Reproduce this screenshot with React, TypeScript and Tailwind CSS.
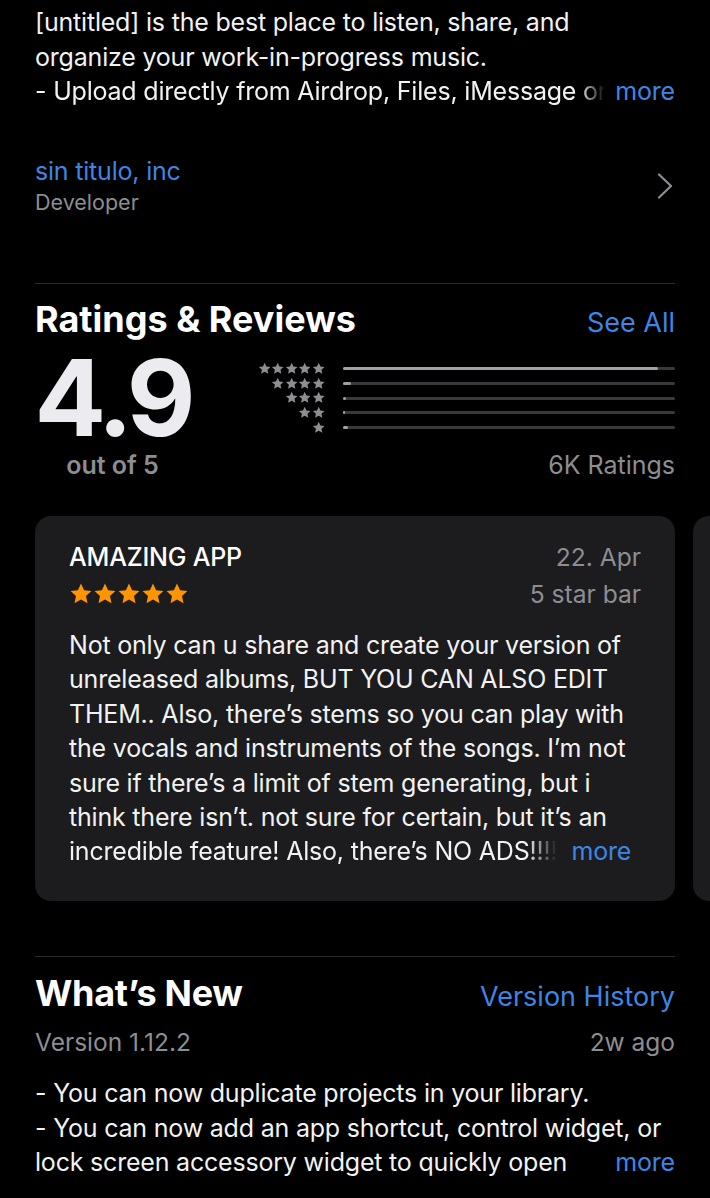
const reviewLines = [
  "Not only can u share and create your version of",
  "unreleased albums, BUT YOU CAN ALSO EDIT",
  "THEM.. Also, there\u2019s stems so you can play with",
  "the vocals and instruments of the songs. I\u2019m not",
  "sure if there\u2019s a limit of stem generating, but i",
  "think there isn\u2019t. not sure for certain, but it\u2019s an",
];

const bars = [
  { stars: 5, pct: 95 },
  { stars: 4, pct: 2.5 },
  { stars: 3, pct: 0.8 },
  { stars: 2, pct: 0.3 },
  { stars: 1, pct: 1.4 },
];

function Star({ className }: { className: string }) {
  return (
    <svg viewBox="0 0 24 24" className={className} fill="currentColor">
      <path d="M12 1.5l3.1 6.7 7.3.8-5.4 5 1.5 7.2L12 17.6l-6.5 3.6 1.5-7.2-5.4-5 7.3-.8z" />
    </svg>
  );
}

export default function App() {
  return (
    <div
      className="min-h-screen w-[710px] overflow-hidden bg-black text-white"
      style={{ fontFamily: "Inter, 'Noto Sans', sans-serif" }}
    >
      <div className="px-[35px]">
        {/* description */}
        <div className="pt-[5px] text-[25px] leading-[34.5px] tracking-[-0.2px] text-[#f2f2f2]">
          <div className="whitespace-nowrap">[untitled] is the best place to listen, share, and</div>
          <div className="whitespace-nowrap">organize your work-in-progress music.</div>
          <div className="flex whitespace-nowrap">
            <span className="min-w-0 flex-1 overflow-hidden [mask-image:linear-gradient(to_right,black_calc(100%-26px),transparent)]">
              - Upload directly from Airdrop, Files, iMessage or
            </span>
            <span className="ml-[10px] text-[#3d86e6]">more</span>
          </div>
        </div>

        {/* developer */}
        <div className="mt-[46px] flex items-center justify-between">
          <div>
            <div className="text-[25px] leading-[32px] tracking-[-0.2px] text-[#3d86e6]">sin titulo, inc</div>
            <div className="text-[21.5px] leading-[30px] text-[#8d8d92]">Developer</div>
          </div>
          <svg viewBox="0 0 16 26" className="mr-[2px] h-[26px] w-[16px]" fill="none">
            <path d="M2 1.5l12 11.5L2 24.5" stroke="#8d8d92" strokeWidth="2.2" strokeLinecap="round" strokeLinejoin="round" />
          </svg>
        </div>

        <div className="mt-[66px] h-px bg-[#2c2c2e]" />

        {/* ratings */}
        <div className="mt-[15px] flex items-baseline justify-between">
          <h2 className="text-[36px] font-bold leading-[40px] tracking-[0px]">Ratings &amp; Reviews</h2>
          <span className="text-[27px] text-[#3d86e6]">See All</span>
        </div>

        <div className="mt-[5px] flex">
          <div className="flex w-[155px] flex-col items-center">
            <div className="text-[106px] font-bold leading-[100px] tracking-[-5px] text-[#ececf0]">4.9</div>
            <div className="text-[25px] font-semibold leading-[34px] text-[#8d8d92]">out of 5</div>
          </div>
          <div className="ml-[45px] flex flex-1 flex-col">
            <div className="mt-[14px] flex flex-col gap-[1.75px]">
              {bars.map((b) => (
                <div key={b.stars} className="flex h-[13px] items-center">
                  <div className="flex w-[90px] justify-end text-[#8d8d92]">
                    {Array.from({ length: b.stars }).map((_, i) => (
                      <Star key={i} className="h-[13.4px] w-[13.4px]" />
                    ))}
                  </div>
                  <div className="ml-[18px] h-[3px] flex-1 rounded-full bg-[#3a3a3c]">
                    <div
                      className="h-full min-w-[2px] rounded-full bg-[#a0a0a5]"
                      style={{ width: `${b.pct}%` }}
                    />
                  </div>
                </div>
              ))}
            </div>
            <div className="mt-auto text-right text-[25px] leading-[34px] text-[#8d8d92]">6K Ratings</div>
          </div>
        </div>
      </div>

      {/* review cards */}
      <div className="mt-[34px] flex gap-[18px] pl-[35px]">
        <div className="w-[640px] shrink-0 rounded-[16px] bg-[#1c1c1e] px-[34px] pt-[24px] pb-[32px]">
          <div className="flex justify-between">
            <div>
              <div className="text-[25px] font-medium leading-[34px] tracking-[-0.2px]">AMAZING APP</div>
              <div className="mt-[8px] flex text-[#ff9500]">
                {Array.from({ length: 5 }).map((_, i) => (
                  <Star key={i} className="h-[24px] w-[24px]" />
                ))}
              </div>
            </div>
            <div className="-mt-[1px] text-right text-[24.6px] leading-[37px] text-[#8d8d92]">
              <div>22. Apr</div>
              <div>5 star bar</div>
            </div>
          </div>
          <div className="mt-[15px] text-[25px] leading-[34.4px] tracking-[-0.2px] text-[#f2f2f2]">
            {reviewLines.map((l) => (
              <div key={l} className="whitespace-nowrap">{l}</div>
            ))}
            <div className="flex whitespace-nowrap">
              <span className="overflow-hidden [mask-image:linear-gradient(to_right,black_calc(100%-30px),transparent)]">
                incredible feature! Also, there&rsquo;s NO ADS!!!!
              </span>
              <span className="ml-[14px] text-[#3d86e6]">more</span>
            </div>
          </div>
        </div>
        <div className="w-[640px] shrink-0 rounded-[16px] bg-[#1c1c1e]" />
      </div>

      <div className="px-[35px]">
        <div className="mt-[55px] h-px bg-[#2c2c2e]" />

        {/* what's new */}
        <div className="mt-[16px] flex items-baseline justify-between">
          <h2 className="text-[36px] font-bold leading-[40px] tracking-[-0.3px]">What&rsquo;s New</h2>
          <span className="text-[27px] text-[#3d86e6]">Version History</span>
        </div>
        <div className="mt-[8px] flex justify-between text-[24.5px] leading-[34px] text-[#8d8d92]">
          <span>Version 1.12.2</span>
          <span>2w ago</span>
        </div>
        <div className="mt-[17px] text-[25px] leading-[34.5px] tracking-[-0.2px] text-[#f2f2f2]">
          <div className="whitespace-nowrap">- You can now duplicate projects in your library.</div>
          <div className="whitespace-nowrap">- You can now add an app shortcut, control widget, or</div>
          <div className="flex justify-between whitespace-nowrap">
            <span>lock screen accessory widget to quickly open</span>
            <span className="text-[#3d86e6]">more</span>
          </div>
        </div>
      </div>
    </div>
  );
}
